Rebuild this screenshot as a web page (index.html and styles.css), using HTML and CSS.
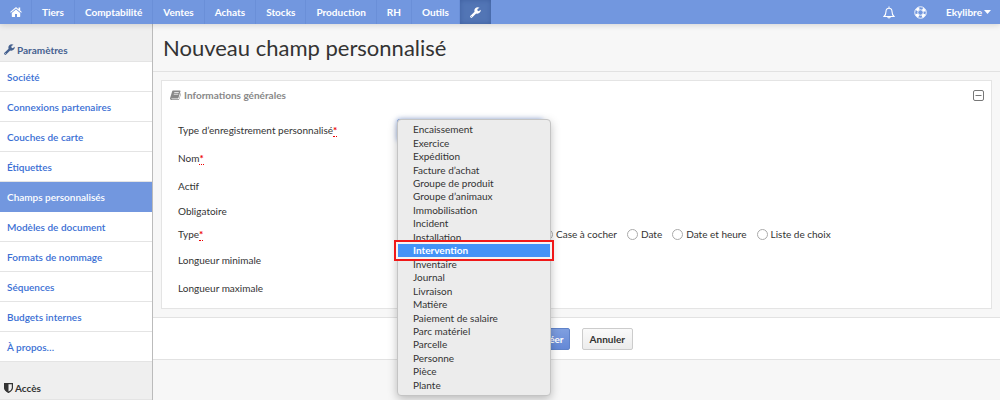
FILE: index.html
```html
<!DOCTYPE html>
<html lang="fr">
<head>
<meta charset="utf-8">
<title>Nouveau champ personnalisé</title>
<link rel="stylesheet" href="styles.css">
</head>
<body>
<header class="topbar">
  <nav class="nav">
    <a class="nav-item nav-home" href="#" aria-label="Accueil"><svg width="12" height="10" viewBox="0 0 24 20" fill="currentColor"><path d="M12 5.2 3.6 12v7c0 .6.4 1 1 1H10v-6h4v6h5.400c.6 0 1-.4 1-1v-7z"/><path d="M23.700 10 20.400 7.200V1.200h-3.300v3.200L13.200 1.100a2 2 0 0 0-2.400 0L.3 10l1.300 1.500L12 2.900l10.400 8.600z"/></svg></a>
    <a class="nav-item" href="#">Tiers</a>
    <a class="nav-item" href="#">Comptabilité</a>
    <a class="nav-item" href="#">Ventes</a>
    <a class="nav-item" href="#">Achats</a>
    <a class="nav-item" href="#">Stocks</a>
    <a class="nav-item" href="#">Production</a>
    <a class="nav-item" href="#">RH</a>
    <a class="nav-item" href="#">Outils</a>
    <a class="nav-item nav-active" href="#" aria-label="Paramètres"><svg width="11" height="11" viewBox="0 0 24 24" fill="currentColor"><path fill-rule="evenodd" d="M23.500 6.200c.3 4.800-3 8.300-7.500 8.300-.9 0-1.700-.1-2.500-.5L4.600 22.900a2.300 2.300 0 0 1-3.300 0l-.3-.3a2.300 2.300 0 0 1 0-3.300L10 10.500C8.200 5 11.700.4 16.800.4c1.500 0 2.900.4 4.100 1.200l-4.700 2.800v3.300l2.600 1.500zM3.300 19.800a1 1 0 1 0 .1 2 1 1 0 0 0-.1-2z"/></svg></a>
  </nav>
  <div class="tools">
    <a class="tool" href="#" aria-label="Notifications"><svg width="12" height="13" viewBox="0 0 24 26" fill="none" stroke="currentColor" stroke-width="2.200"><path d="M12 1v3M2 21c3.200-3 4-5.500 4-10 0-4 2.500-6.500 6-6.500s6 2.500 6 6.500c0 4.500.8 7 4 10zM9.500 21.500a2.500 2.500 0 0 0 5 0"/></svg></a>
    <a class="tool" href="#" aria-label="Aide"><svg width="13" height="13" viewBox="0 0 26 26" fill="none" stroke="currentColor"><circle cx="13" cy="13" r="11.500" stroke-width="1.800"/><circle cx="13" cy="13" r="5.500" stroke-width="1.800"/><circle cx="13" cy="13" r="8.500" stroke-width="5" stroke-dasharray="6.600 6.750" stroke-dashoffset="-3.300"/></svg></a>
    <a class="account" href="#">Ekylibre<svg width="7" height="4" viewBox="0 0 14 8" fill="currentColor"><path d="M0 0h14L7 8z"/></svg></a>
  </div>
</header>
<div class="layout">
  <aside class="sidebar">
    <h2 class="side-title side-current"><svg width="11" height="11" viewBox="0 0 24 24" fill="currentColor"><path fill-rule="evenodd" d="M23.500 6.200c.3 4.800-3 8.300-7.500 8.300-.9 0-1.700-.1-2.500-.5L4.600 22.900a2.300 2.300 0 0 1-3.300 0l-.3-.3a2.300 2.300 0 0 1 0-3.300L10 10.500C8.200 5 11.700.4 16.800.4c1.500 0 2.900.4 4.100 1.200l-4.700 2.800v3.300l2.600 1.500zM3.300 19.800a1 1 0 1 0 .1 2 1 1 0 0 0-.1-2z"/></svg>Paramètres</h2>
    <nav class="side-nav">
      <a class="side-link" href="#">Société</a>
      <a class="side-link" href="#">Connexions partenaires</a>
      <a class="side-link" href="#">Couches de carte</a>
      <a class="side-link" href="#">Étiquettes</a>
      <a class="side-link side-selected" href="#">Champs personnalisés</a>
      <a class="side-link" href="#">Modèles de document</a>
      <a class="side-link" href="#">Formats de nommage</a>
      <a class="side-link" href="#">Séquences</a>
      <a class="side-link" href="#">Budgets internes</a>
      <a class="side-link" href="#">À propos…</a>
    </nav>
    <h2 class="side-title"><svg width="9" height="10" viewBox="0 0 18 20"><path d="M1.200 1.200h15.600v9c0 4-4.500 7-7.800 8.600-3.300-1.600-7.800-4.600-7.800-8.600z" fill="none" stroke="currentColor" stroke-width="2.400"/><path d="M1 1h8v18c-3.500-1.800-8-5-8-9z" fill="currentColor"/></svg>Accès</h2>
  </aside>
  <main class="main">
    <h1 class="title">Nouveau champ personnalisé</h1>
    <form class="form">
      <section class="panel">
        <div class="panel-head">
          <h2 class="panel-title"><svg width="11" height="10" viewBox="0 0 22 20"><path d="M6.500 1h13.300c1 0 1.500.7 1.200 1.600L17 15.500c-.3.900-.8 1.300-1.700 1.300H3.500c-1.500 0-.9 1.600.5 1.600h12.500c.9 0 1.300-.4 1.600-1.200l3.500-11c.9.600.500 1.300.4 1.600l-3.300 10.400c-.4 1.200-1.200 1.800-2.400 1.800H3.200C1 20-.5 17.800.2 15.800L4.200 3C4.700 1.500 5.200 1 6.500 1z" fill="currentColor"/><path d="M8.500 5h9M7.500 8.500h9" stroke="#fff" stroke-width="1.500"/></svg>Informations générales</h2>
          <button class="collapse" type="button" aria-label="Réduire"><svg width="11" height="11" viewBox="0 0 11 11" fill="none" stroke="currentColor"><rect x=".5" y=".5" width="10" height="10" rx="1.500"/><path d="M2.500 5.500h6"/></svg></button>
        </div>
        <div class="fields">
          <div class="field">
            <label class="label" for="record">Type d’enregistrement personnalisé<abbr class="required">*</abbr></label>
            <div class="control">
              <select class="input record" id="record"><option>Intervention</option></select>
              <ul class="menu">
                <li class="option">Encaissement</li>
                <li class="option">Exercice</li>
                <li class="option">Expédition</li>
                <li class="option">Facture d’achat</li>
                <li class="option">Groupe de produit</li>
                <li class="option">Groupe d’animaux</li>
                <li class="option">Immobilisation</li>
                <li class="option">Incident</li>
                <li class="option">Installation</li>
                <li class="option option-active">Intervention</li>
                <li class="option">Inventaire</li>
                <li class="option">Journal</li>
                <li class="option">Livraison</li>
                <li class="option">Matière</li>
                <li class="option">Paiement de salaire</li>
                <li class="option">Parc matériel</li>
                <li class="option">Parcelle</li>
                <li class="option">Personne</li>
                <li class="option">Pièce</li>
                <li class="option">Plante</li>
              </ul>
            </div>
          </div>
          <div class="field">
            <label class="label" for="name">Nom<abbr class="required">*</abbr></label>
            <div class="control"><input class="input" id="name" type="text"></div>
          </div>
          <div class="field">
            <label class="label" for="active">Actif</label>
            <div class="control"><input class="check" id="active" type="checkbox"></div>
          </div>
          <div class="field field-tight">
            <label class="label" for="mandatory">Obligatoire</label>
            <div class="control"><input class="check" id="mandatory" type="checkbox"></div>
          </div>
          <div class="field field-choice" role="radiogroup" aria-labelledby="kind">
            <span class="label" id="kind">Type<abbr class="required">*</abbr></span>
            <div class="control choices">
              <label class="choice"><input class="radio" type="radio" name="kind">Case à cocher</label>
              <label class="choice"><input class="radio" type="radio" name="kind">Date</label>
              <label class="choice"><input class="radio" type="radio" name="kind">Date et heure</label>
              <label class="choice"><input class="radio" type="radio" name="kind">Liste de choix</label>
            </div>
          </div>
          <div class="field">
            <label class="label" for="min">Longueur minimale</label>
            <div class="control"><input class="input" id="min" type="text"></div>
          </div>
          <div class="field">
            <label class="label" for="max">Longueur maximale</label>
            <div class="control"><input class="input" id="max" type="text"></div>
          </div>
        </div>
      </section>
      <div class="actions">
        <button class="button button-primary" type="submit">Créer</button>
        <button class="button" type="button">Annuler</button>
      </div>
    </form>
  </main>
</div>
</body>
</html>
```
FILE: styles.css
```css
* { box-sizing: border-box; }

body {
  margin: 0;
  min-height: 100vh;
  display: flex;
  flex-direction: column;
  overflow: hidden;
  background: #f7f7f7;
  color: #333;
  font: 10px/14px Lato, sans-serif;
}

a { color: inherit; text-decoration: none; }
h1, h2, ul { margin: 0; padding: 0; }
svg { display: block; flex: none; }

.topbar {
  display: flex;
  justify-content: space-between;
  height: 24px;
  background: #7297df;
  color: #fff;
  font-size: 10px;
  font-weight: 700;
  box-shadow: 0 1px 6px rgba(0, 0, 0, 0.15);
  position: relative;
  z-index: 1;
}

.nav, .tools { display: flex; }

.nav-item {
  display: flex;
  align-items: center;
  padding: 0 10px;
  border-right: 1px solid #6a8fd8;
}

.nav-home { padding: 0 9px 0 10px; }

.nav-active {
  border: 0;
  background: #5275b5;
  box-shadow: inset 0 0 5px #3f60a0;
}

.tools { align-items: center; gap: 19px; padding-right: 9px; }
.account { display: flex; align-items: center; gap: 2px; }

.layout { display: flex; flex: 1; }

.sidebar {
  flex: 0 0 153px;
  border-right: 1px solid #bbb;
  background: #efefef;
}

.side-title {
  display: flex;
  align-items: center;
  gap: 2px;
  height: 38px;
  padding: 14px 4px 0;
  border-bottom: 1px solid #e4e4e4;
  font-size: 10px;
  font-weight: 700;
}

.side-current { color: #45618f; }

.side-nav { display: flex; flex-direction: column; background: #fff; }

.side-link {
  height: 30px;
  padding: 8px 7px;
  border-bottom: 1px solid #e4e4e4;
  color: #3b6fd4;
  font-weight: 600;
}

.side-selected { background: #7297df; border-color: #7297df; color: #fff; }

.main { flex: 1; min-width: 0; }

.title {
  padding: 8px 10px 7px;
  border-bottom: 1px solid #e2e2e2;
  font-size: 22px;
  line-height: 32px;
  font-weight: 400;
}

.panel {
  margin: 8px;
  padding-bottom: 6px;
  border: 1px solid #e4e4e4;
  background: #fff;
}

.panel-head {
  display: flex;
  align-items: center;
  justify-content: space-between;
  height: 28px;
  padding: 0 7px 0 8px;
}

.panel-title {
  display: flex;
  align-items: center;
  gap: 3px;
  color: #888;
  font-size: 10px;
  font-weight: 700;
}

.collapse { padding: 0; border: 0; background: none; color: #777; }

.fields { padding: 7px 16px 0; }
.field { display: flex; align-items: center; height: 28px; }
.field-tight { height: 22px; }
.field-choice { height: 24px; }
.label { flex: 0 0 219px; }
.required { color: #e00; border-bottom: 1px dotted #e00; font-weight: 700; }
.control { position: relative; display: flex; flex: 1; }

.input {
  width: 140px;
  height: 22px;
  border: 1px solid #ccc;
  border-radius: 2px;
  background: #fff;
  font: inherit;
}

.record {
  width: 146px;
  border-color: #8eaae0;
  box-shadow: 0 0 5px #9db5e6;
}

.check { width: 11px; height: 11px; margin: 0 4px; }

.menu {
  position: absolute;
  z-index: 2;
  top: 0;
  left: 0;
  display: grid;
  grid-auto-rows: 1fr;
  width: 154px;
  height: 277px;
  padding: 3px 0;
  border: 1px solid #c4c4c4;
  border-radius: 4px;
  background: #ececec;
  box-shadow: 0 3px 10px rgba(0, 0, 0, 0.25);
  line-height: 13px;
  list-style: none;
}

.option { display: flex; align-items: center; padding: 0 15px; }

.option-active {
  background: #4493f7;
  color: #fff;
  font-weight: 700;
  outline: 2px solid #f01818;
  outline-offset: 2px;
  box-shadow: 0 0 0 2px #f4f4f4;
}

.choices { gap: 10px; padding-left: 145px; }
.choice { display: flex; align-items: center; gap: 3px; }

.radio {
  appearance: none;
  width: 11px;
  height: 11px;
  margin: 0;
  border: 1px solid #aaa;
  border-radius: 50%;
  background: #fff;
}

.actions {
  display: flex;
  align-items: center;
  justify-content: center;
  gap: 12px;
  height: 43px;
  border: solid #e2e2e2;
  border-width: 1px 0;
  background: #fff;
}

.button {
  height: 22px;
  padding: 0 7px;
  border: 1px solid #ccc;
  border-radius: 2px;
  background: linear-gradient(#fafafa, #ececec);
  color: #333;
  font: 700 10px/14px Lato, sans-serif;
}

.button-primary {
  padding: 0 5px 0 18px;
  border-color: #5f82c8;
  background: linear-gradient(#7f9fe0, #6488d6);
  color: #fff;
}
```
